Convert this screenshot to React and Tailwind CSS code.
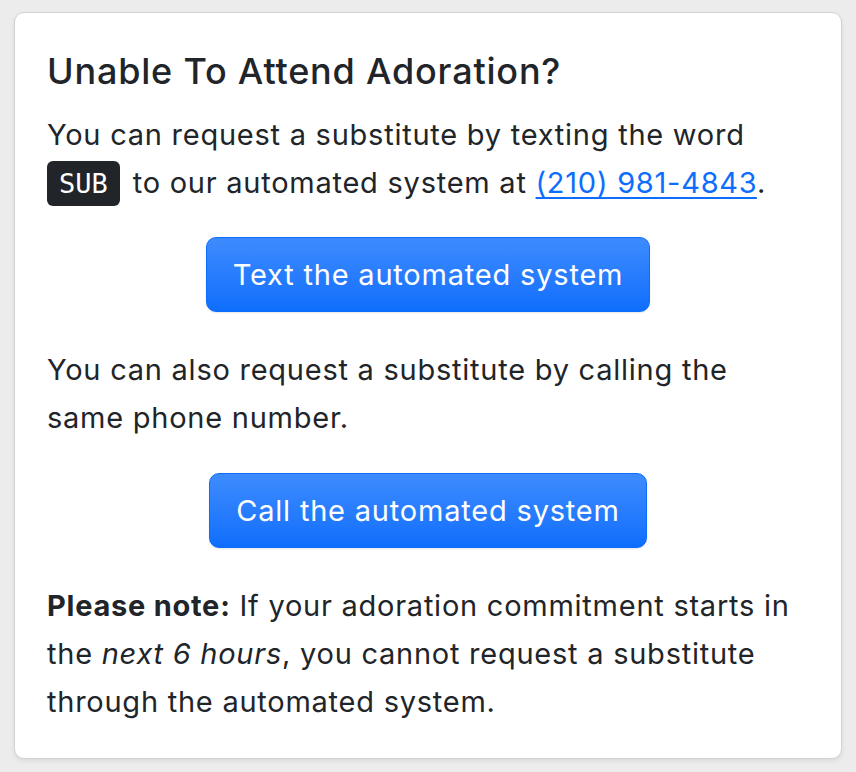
import React from "react";

export default function App() {
  return (
    <div className="min-h-[772px] bg-[#ececec] px-[14px] pt-[12px] pb-[14px] font-['Inter','Liberation_Sans',sans-serif] text-[#212529]">
      <div className="rounded-[10px] border border-[#d3d3d3] bg-white px-[32px] pt-[34px] pb-[32px] shadow-[0_2px_4px_rgba(0,0,0,0.08)]">
        <h4 className="text-[36px] font-medium leading-[48px] tracking-[0.8px]">Unable To Attend Adoration?</h4>
        <p className="mt-[16px] text-[29px] leading-[48px] tracking-[0.75px]">
          You can request a substitute by texting the word{" "}
          <kbd className="mr-[4px] rounded-[6px] bg-[#212529] px-[12px] py-[7px] font-['DejaVu_Sans_Mono',monospace] text-[27px] tracking-normal text-white">SUB</kbd>{" "}
          to our automated system at{" "}
          <a href="#" className="text-[#0d6efd] underline underline-offset-[4px]">(210) 981-4843</a>.
        </p>
        <div className="mt-[29px] flex justify-center">
          <button className="h-[75px] w-[444px] rounded-[10px] border border-[#0d6efd] bg-gradient-to-b from-[#3d8bfd] to-[#0d6efd] text-[29px] tracking-[0.8px] text-white shadow-[0_1px_2px_rgba(0,0,0,0.1)]">
            Text the automated system
          </button>
        </div>
        <p className="mt-[34px] text-[29px] leading-[48px] tracking-[0.75px]">
          You can also request a substitute by calling the same phone number.
        </p>
        <div className="mt-[31px] flex justify-center">
          <button className="h-[75px] w-[438px] rounded-[10px] border border-[#0d6efd] bg-gradient-to-b from-[#3d8bfd] to-[#0d6efd] text-[29px] tracking-[0.8px] text-white shadow-[0_1px_2px_rgba(0,0,0,0.1)]">
            Call the automated system
          </button>
        </div>
        <p className="mt-[34px] text-[29px] leading-[48px] tracking-[0.75px]">
          <b className="font-bold">Please note:</b> If your adoration commitment starts in the{" "}
          <i>next 6 hours</i>, you cannot request a substitute through the automated system.
        </p>
      </div>
    </div>
  );
}
